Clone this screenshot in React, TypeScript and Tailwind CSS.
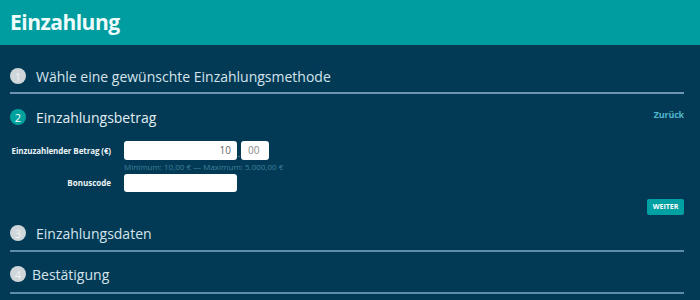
import React from "react";

function Circle({ n, active }: { n: number; active?: boolean }) {
  return (
    <div
      className={
        "w-[16px] h-[16px] rounded-full flex items-center justify-center text-[11px] leading-none shrink-0 " +
        (active ? "bg-[#00a29d] text-white" : "bg-[#cfd6da] text-[#eef2f4]")
      }
    >
      {n}
    </div>
  );
}

export default function App() {
  return (
    <div
      className="w-[700px] h-[300px] overflow-hidden bg-[#023a55]"
      style={{ fontFamily: '"Open Sans", "Noto Sans", sans-serif' }}
    >
      <header className="h-[45px] bg-[#009da0] px-[10px] flex items-center">
        <h1 className="text-[21px] font-bold text-[#eefcfc] leading-none tracking-[-0.5px]">Einzahlung</h1>
      </header>
      <main className="pl-[10px] pr-[16px]">
        {/* Step 1 */}
        <div className="pt-[19px] pb-[4px] border-b-2 border-[#6d95ad]">
          <div className="h-[24px] flex items-center">
            <Circle n={1} />
            <span className="ml-[10px] text-[14px] text-[#d5e4ec]">
              Wähle eine gewünschte Einzahlungsmethode
            </span>
          </div>
        </div>
        {/* Step 2 */}
        <div className="mt-[11px] h-[24px] flex items-start justify-between">
          <div className="h-[24px] flex items-center">
            <Circle n={2} active />
            <span className="ml-[10px] text-[14px] text-[#e3eef3]">Einzahlungsbetrag</span>
          </div>
          <span className="mt-[3px] text-[9px] font-bold text-[#4fb5cc] tracking-[-0.2px]">Zurück</span>
        </div>
        <div className="mt-[12px] flex flex-col">
          <div className="flex items-center">
            <div className="w-[101px] text-right text-[8px] font-bold text-[#eef3f6] whitespace-nowrap tracking-[-0.1px]">
              Einzuzahlender Betrag (€)
            </div>
            <div className="ml-[13px] flex items-end">
              <div className="w-[113px] h-[19px] bg-white rounded-[3px] flex items-center justify-end pr-[6px] text-[10px] text-[#666]">
                10
              </div>
              <span className="w-[4px] text-center text-[9px] text-[#aac] leading-none mb-[2px]">.</span>
              <div className="w-[28px] h-[19px] bg-white rounded-[3px] flex items-center pl-[7px] text-[10px] text-[#888]">
                00
              </div>
            </div>
          </div>
          <div className="ml-[114px] h-[14px] flex items-center text-[8px] text-[#3f8099] whitespace-nowrap">
            Minimum: 10,00 € — Maximum: 5.000,00 €
          </div>
          <div className="flex items-center">
            <div className="w-[101px] text-right text-[8px] font-bold text-[#eef3f6]">Bonuscode</div>
            <div className="ml-[13px] w-[113px] h-[18px] bg-white rounded-[3px]" />
          </div>
        </div>
        <div className="mt-[7px] flex justify-end">
          <button className="w-[37px] h-[16px] bg-[#00a0a3] rounded-[2px] text-[7px] font-bold text-white flex items-center justify-center">
            WEITER
          </button>
        </div>
        {/* Step 3 */}
        <div className="mt-[6px] pb-[5px] border-b-2 border-[#5f8ca6]">
          <div className="h-[24px] flex items-center">
            <Circle n={3} />
            <span className="ml-[10px] text-[14px] text-[#d5e4ec]">Einzahlungsdaten</span>
          </div>
        </div>
        {/* Step 4 */}
        <div className="mt-[10px] pb-[6px] border-b-2 border-[#5f8ca6]">
          <div className="h-[24px] flex items-center">
            <Circle n={4} />
            <span className="ml-[6px] text-[14px] text-[#d5e4ec]">Bestätigung</span>
          </div>
        </div>
      </main>
    </div>
  );
}
